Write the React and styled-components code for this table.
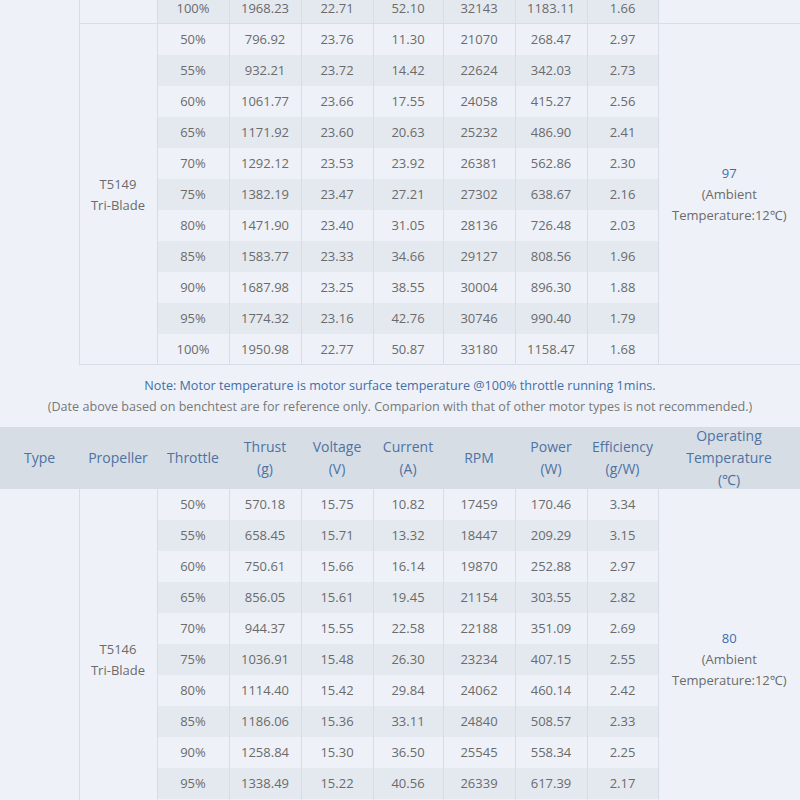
import React from "react";
import styled, { createGlobalStyle } from "styled-components";

const GlobalStyle = createGlobalStyle`
  html, body {
    margin: 0;
    padding: 0;
    overflow: hidden;
    background: #eef2f8;
  }
  body {
    font-family: "Open Sans", "Noto Sans", sans-serif;
  }
`;

const Page = styled.div`
  width: 800px;
  height: 800px;
  overflow: hidden;
  background: #eef2f8;
`;

const Table = styled.table`
  width: 800px;
  border-collapse: collapse;
  table-layout: fixed;
  margin-top: ${(p) => p.$offset || 0}px;
`;

const Head = styled.th`
  padding: 0;
  background: #d7dde5;
  font-weight: normal;
  font-size: 14px;
  color: #4d73a3;
`;

const HeadInner = styled.div`
  height: 62px;
  line-height: 22px;
  display: flex;
  align-items: center;
  justify-content: center;
  text-align: center;
  overflow: hidden;
`;

const Cell = styled.td`
  height: 31px;
  padding: 0;
  text-align: center;
  vertical-align: middle;
  font-size: 13px;
  line-height: 21px;
  color: #6b6b6b;
  border-right: ${(p) => (p.$noRight ? "none" : "1px solid #d7dde5")};
  box-shadow: ${(p) => (p.$bottom ? "inset 0 -1px 0 #d7dde5" : "none")};
  background: ${(p) => (p.$shade ? "#e4e9f0" : "transparent")};
`;

const Blue = styled.span`
  color: #3f6ea8;
`;

const Note = styled.div`
  height: 62px;
  display: flex;
  flex-direction: column;
  align-items: center;
  justify-content: center;
  font-size: 12.6px;
  line-height: 21px;
  color: #787878;
`;

const widths = [79, 78, 72, 72, 72, 70, 72, 72, 71, 142];

const headers = [
  ["Type"],
  ["Propeller"],
  ["Throttle"],
  ["Thrust", "(g)"],
  ["Voltage", "(V)"],
  ["Current", "(A)"],
  ["RPM"],
  ["Power", "(W)"],
  ["Efficiency", "(g/W)"],
  ["Operating", "Temperature", "(℃)"],
];

const prevTail = [["100%", "1968.23", "22.71", "52.10", "32143", "1183.11", "1.66"]];

const t5149 = [
  ["50%", "796.92", "23.76", "11.30", "21070", "268.47", "2.97"],
  ["55%", "932.21", "23.72", "14.42", "22624", "342.03", "2.73"],
  ["60%", "1061.77", "23.66", "17.55", "24058", "415.27", "2.56"],
  ["65%", "1171.92", "23.60", "20.63", "25232", "486.90", "2.41"],
  ["70%", "1292.12", "23.53", "23.92", "26381", "562.86", "2.30"],
  ["75%", "1382.19", "23.47", "27.21", "27302", "638.67", "2.16"],
  ["80%", "1471.90", "23.40", "31.05", "28136", "726.48", "2.03"],
  ["85%", "1583.77", "23.33", "34.66", "29127", "808.56", "1.96"],
  ["90%", "1687.98", "23.25", "38.55", "30004", "896.30", "1.88"],
  ["95%", "1774.32", "23.16", "42.76", "30746", "990.40", "1.79"],
  ["100%", "1950.98", "22.77", "50.87", "33180", "1158.47", "1.68"],
];

const t5146 = [
  ["50%", "570.18", "15.75", "10.82", "17459", "170.46", "3.34"],
  ["55%", "658.45", "15.71", "13.32", "18447", "209.29", "3.15"],
  ["60%", "750.61", "15.66", "16.14", "19870", "252.88", "2.97"],
  ["65%", "856.05", "15.61", "19.45", "21154", "303.55", "2.82"],
  ["70%", "944.37", "15.55", "22.58", "22188", "351.09", "2.69"],
  ["75%", "1036.91", "15.48", "26.30", "23234", "407.15", "2.55"],
  ["80%", "1114.40", "15.42", "29.84", "24062", "460.14", "2.42"],
  ["85%", "1186.06", "15.36", "33.11", "24840", "508.57", "2.33"],
  ["90%", "1258.84", "15.30", "36.50", "25545", "558.34", "2.25"],
  ["95%", "1338.49", "15.22", "40.56", "26339", "617.39", "2.17"],
  ["100%", "1422.75", "15.12", "45.60", "27310", "689.47", "2.06"],
];

const Cols = () => (
  <colgroup>
    {widths.map((w, i) => (
      <col key={i} style={{ width: w }} />
    ))}
  </colgroup>
);

// one propeller block: merged propeller + temperature cells, striped data rows
const Group = ({ rows, propeller, temp, typeSpan, startShade }) =>
  rows.map((r, i) => {
    const last = i === rows.length - 1;
    const shade = (i + startShade) % 2 === 1;
    return (
      <tr key={r[0]}>
        {i === 0 && typeSpan ? <Cell rowSpan={typeSpan} /> : null}
        {i === 0 && (
          <Cell rowSpan={rows.length} $bottom>
            {propeller}
          </Cell>
        )}
        {r.map((v) => (
          <Cell key={v} $shade={shade} $bottom={last}>
            {v}
          </Cell>
        ))}
        {i === 0 && (
          <Cell rowSpan={rows.length} $bottom $noRight>
            {temp}
          </Cell>
        )}
      </tr>
    );
  });

const Temp = ({ value }) => (
  <>
    <Blue>{value}</Blue>
    <br />
    (Ambient
    <br />
    Temperature:12℃)
  </>
);

const App = () => {
  return (
    <Page>
      <GlobalStyle />
      <Table $offset={-7}>
        <Cols />
        <tbody>
          <Group rows={prevTail} startShade={1} typeSpan={12} />
          <Group
            rows={t5149}
            startShade={0}
            propeller={
              <>
                T5149
                <br />
                Tri-Blade
              </>
            }
            temp={<Temp value="97" />}
          />
        </tbody>
      </Table>
      <Note>
        <Blue>Note: Motor temperature is motor surface temperature @100% throttle running 1mins.</Blue>
        <div>
          (Date above based on benchtest are for reference only. Comparion with that of other motor
          types is not recommended.)
        </div>
      </Note>
      <Table>
        <Cols />
        <thead>
          <tr>
            {headers.map((h) => (
              <Head key={h[0]}>
                <HeadInner>
                  <div>
                    {h.map((line, i) => (
                      <div key={i}>{line}</div>
                    ))}
                  </div>
                </HeadInner>
              </Head>
            ))}
          </tr>
        </thead>
        <tbody>
          <Group
            rows={t5146}
            startShade={0}
            typeSpan={11}
            propeller={
              <>
                T5146
                <br />
                Tri-Blade
              </>
            }
            temp={<Temp value="80" />}
          />
        </tbody>
      </Table>
    </Page>
  );
};

export default App;
